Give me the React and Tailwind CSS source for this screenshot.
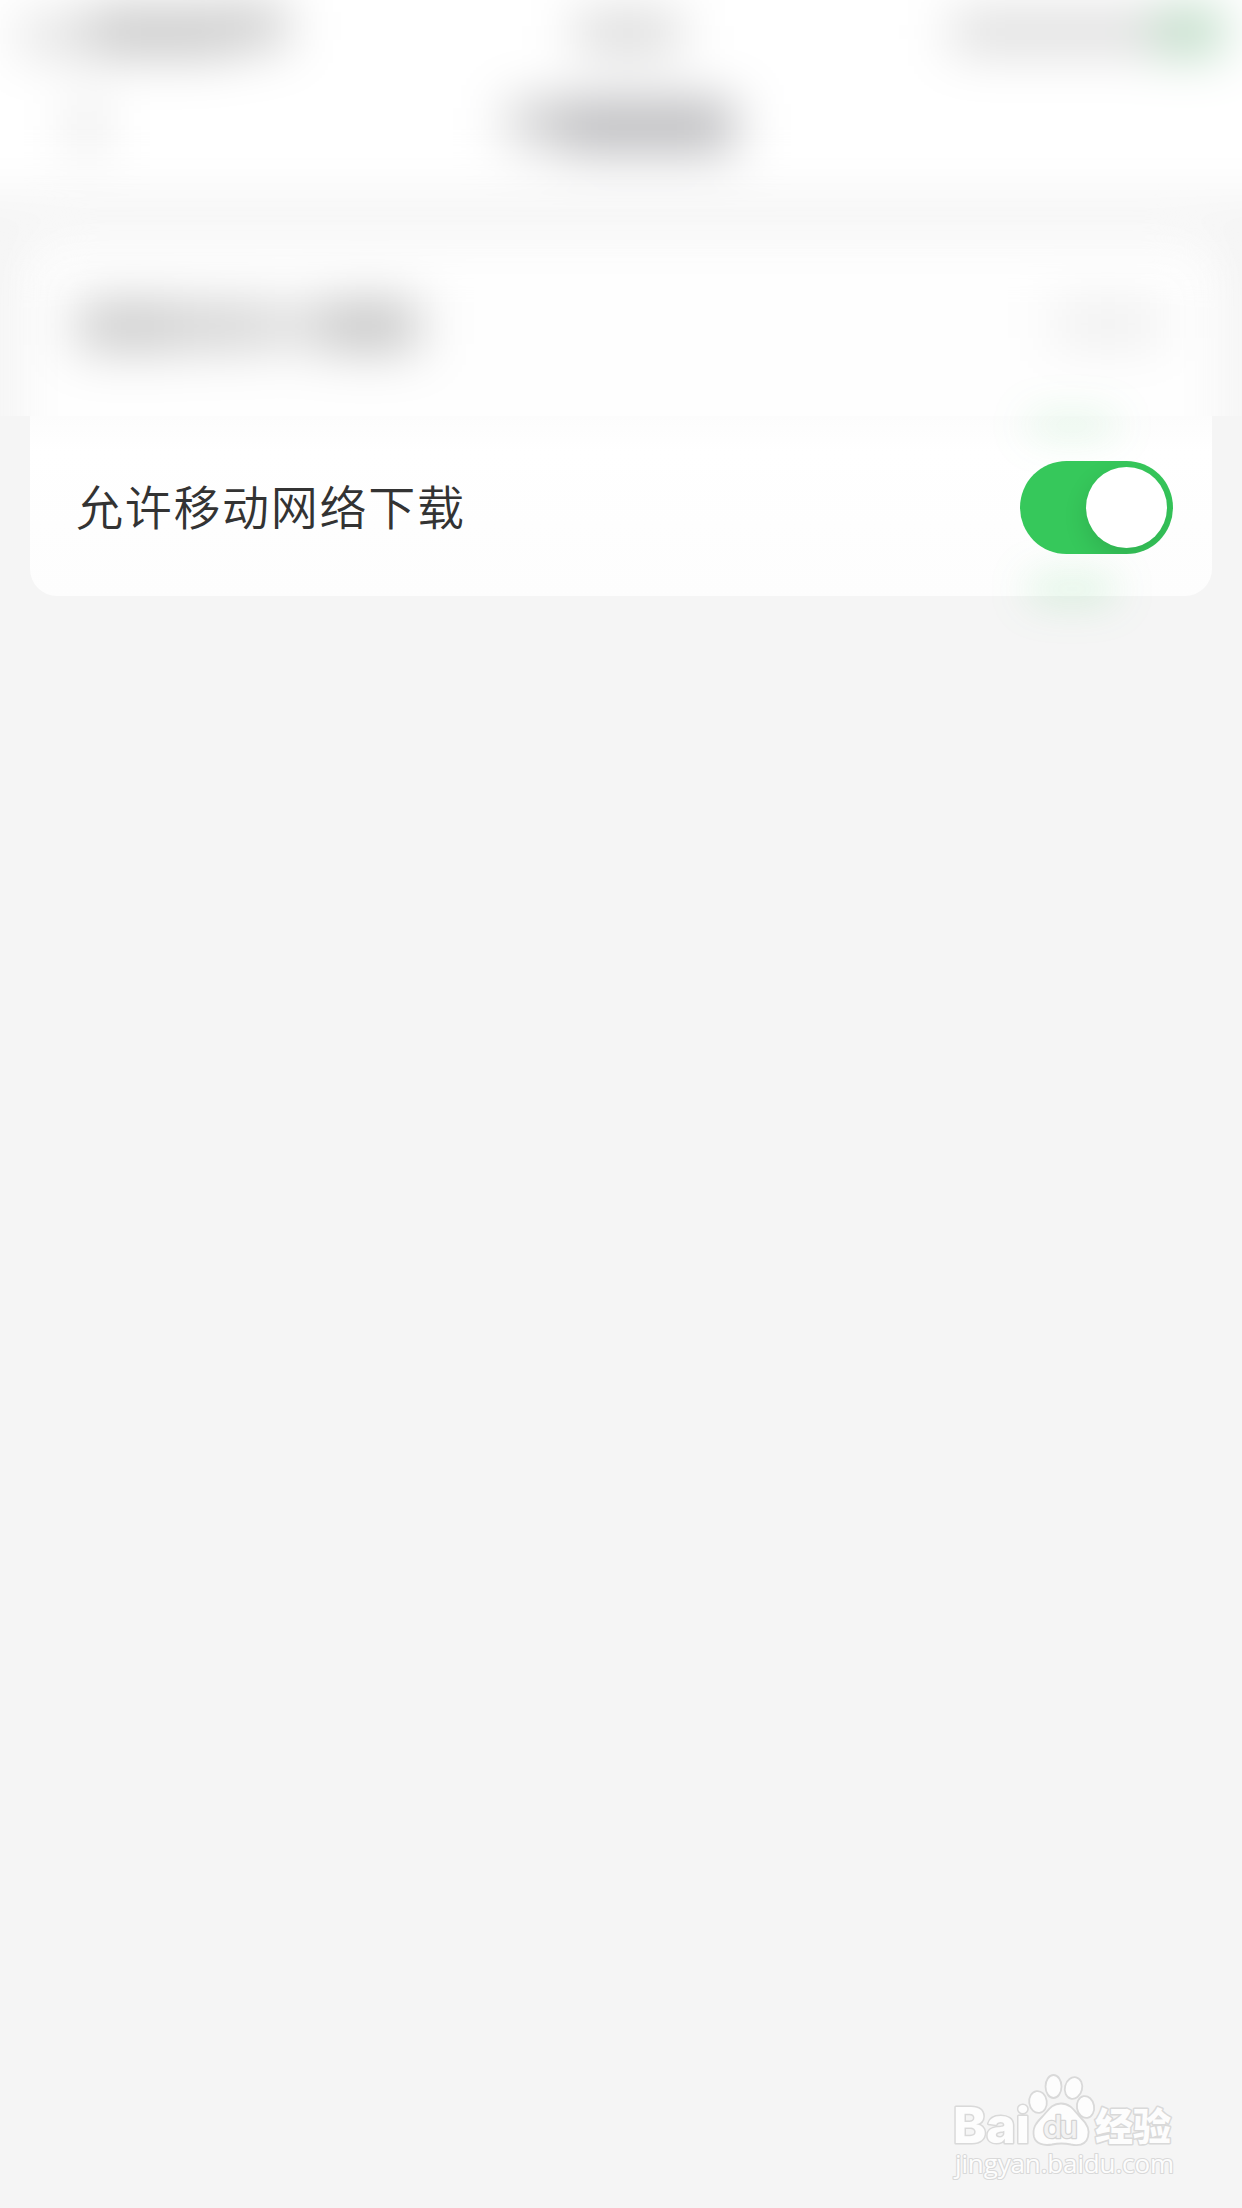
import React, { useState } from 'react';

// Soft placeholder used by the out-of-focus part of the screen
const Smudge = ({ className = '' }) => <span className={`block shrink-0 ${className}`} />;

const StatusBar = () => (
  <div className="grid h-[60px] grid-cols-3 items-start px-[20px] pt-[10px]">
    <div className="flex items-center">
      <Smudge className="mt-2 h-9 w-[70px] bg-[#dedede]" />
      <Smudge className="h-11 w-[140px] bg-[#c1c1c1]" />
      <Smudge className="-mt-3 h-10 w-[56px] bg-[#c4c4c4]" />
    </div>
    <div className="flex justify-center pl-[14px] pt-[5px]">
      <Smudge className="h-9 w-[104px] bg-[#d2d2d2]" />
    </div>
    <div className="flex items-center justify-end pt-[2px]">
      <Smudge className="h-9 w-[206px] bg-[#d6d6d6]" />
      <Smudge className="h-10 w-[64px] bg-[#aad2b5]" />
    </div>
  </div>
);

const NavBar = () => (
  <div className="grid h-[132px] grid-cols-3 items-center">
    <Smudge className="ml-[76px] h-[50px] w-[22px] bg-[#dadada]" />
    <div className="flex items-center justify-center">
      <Smudge className="-mt-2 h-10 w-[52px] bg-[#c9c9ca]" />
      <Smudge className="h-[48px] w-[174px] bg-[#b2b2b5]" />
    </div>
  </div>
);

const BlurredTop = () => (
  <div className="h-[416px] overflow-hidden">
    <div className="-mx-20 -mt-20 blur-[26px]">
      <header className="bg-white px-20 pt-20">
        <StatusBar />
        <NavBar />
      </header>
      <div className="px-[104px] pt-[48px]">
        <div className="flex h-[320px] items-start justify-between rounded-t-[27px] bg-[#fefefe] pl-[54px] pr-[56px] pt-[64px]">
          <div className="flex items-center">
            <Smudge className="h-11 w-[96px] bg-[#c3c3c3]" />
            <Smudge className="h-10 w-[92px] bg-[#cacaca]" />
            <Smudge className="h-9 w-[56px] bg-[#d7d7d7]" />
            <Smudge className="h-11 w-[96px] bg-[#bcbcbc]" />
          </div>
          <Smudge className="h-10 w-[108px] bg-[#ededed]" />
        </div>
      </div>
    </div>
  </div>
);

const Switch = ({ checked, onChange }) => (
  <button
    type="button"
    role="switch"
    aria-checked={checked}
    onClick={() => onChange(!checked)}
    className={`flex h-[93px] w-[153px] items-center overflow-hidden rounded-full p-[6px] ${
      checked ? 'justify-end bg-[#36c85b]' : 'justify-start bg-[#e9e9ea]'
    }`}
  >
    <span className="h-[81px] w-[81px] rounded-full bg-white shadow-[0_9px_24px_rgba(0,0,0,0.12)]" />
  </button>
);

const Watermark = () => (
  <svg
    className="h-[130px] w-[270px]"
    viewBox="0 0 270 130"
    fill="#fdfdfd"
    stroke="#d9d9d9"
    strokeWidth="3"
    strokeLinejoin="round"
  >
    <g paintOrder="stroke" fontWeight="800">
      <text
        x="23"
        y="83"
        fontSize="49"
        textLength="77"
        lengthAdjust="spacingAndGlyphs"
        fontFamily="Inter, 'Liberation Sans', sans-serif"
      >
        Bai
      </text>
      <text x="165" y="80" fontSize="38" textLength="76" fontFamily="'Noto Sans CJK SC', sans-serif">
        经验
      </text>
    </g>
    <g strokeWidth="1.8">
      <ellipse cx="108" cy="42" rx="8.8" ry="11" transform="rotate(-8 108 42)" />
      <ellipse cx="123.5" cy="26.5" rx="8" ry="11.5" />
      <ellipse cx="143.5" cy="28" rx="8.6" ry="11" transform="rotate(14 143.5 28)" />
      <ellipse cx="155.5" cy="47" rx="8.6" ry="11" transform="rotate(-10 155.5 47)" />
      <path d="M131 43.500C141 43.500 145 52 151 58C157 63.500 160 70 158 77C156 84.500 149 86 141 84.500C134 83 129 83 122 84.500C114 86 106 84 104 77C102 68 106 63 112 57C118 51 121 43.500 131 43.500Z" />
    </g>
    <text
      x="113"
      y="78"
      fontSize="31"
      textLength="35"
      fill="#f2f2f2"
      stroke="#d4d4d4"
      strokeWidth="2.6"
      paintOrder="stroke"
      fontWeight="500"
      fontFamily="Inter, 'Liberation Sans', sans-serif"
    >
      du
    </text>
    <text
      x="25"
      y="113"
      fontSize="26"
      textLength="219"
      strokeWidth="2.2"
      paintOrder="stroke"
      fontFamily="'Open Sans', 'Noto Sans', sans-serif"
    >
      jingyan.baidu.com
    </text>
  </svg>
);

const App = () => {
  const [allowMobile, setAllowMobile] = useState(true);

  return (
    <div className="flex h-[2208px] w-[1242px] flex-col overflow-hidden bg-[#f5f5f5] font-['Noto_Sans_CJK_SC',sans-serif]">
      <BlurredTop />

      <main className="px-[30px]">
        <section className="relative flex h-[180px] items-center justify-between rounded-b-[27px] bg-gradient-to-b from-[#fcfcfc] via-white via-20% to-[#fdfdfd] pl-[46px] pr-[39px]">
          {/* Green glow bleeding above and below the switch */}
          <span className="absolute right-[95px] top-0 h-[18px] w-[90px] rounded-full bg-[#36c85b]/18 blur-[20px]" />
          <span className="absolute right-[95px] -bottom-[6px] h-[26px] w-[90px] rounded-full bg-[#36c85b]/18 blur-[20px]" />

          <span className="relative pb-[4px] text-[47px] font-[350] leading-none tracking-[1.7px] text-[#333333]">
            允许移动网络下载
          </span>
          <div className="relative flex pt-[2px]">
            <Switch checked={allowMobile} onChange={setAllowMobile} />
          </div>
        </section>
      </main>

      <footer className="mt-auto flex justify-end pb-[18px] pr-[42px]">
        <Watermark />
      </footer>
    </div>
  );
};

export default App;
